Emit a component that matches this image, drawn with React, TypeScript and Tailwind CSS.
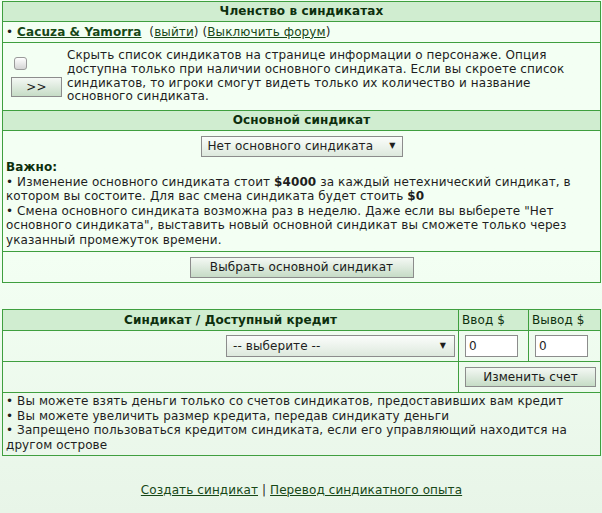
import React from "react";

const btn =
  "border border-[#8c8c8c] bg-gradient-to-b from-[#f4f8f4] to-[#c6dcc6] text-[#1a1a1a] leading-[14px] text-[12px] font-['DejaVu_Sans',Verdana,sans-serif] tracking-[0.1px]";

export default function App() {
  return (
    <div className="min-h-[513px] w-[602px] bg-gradient-to-b from-[#f3fff3] via-[#f3fff3] to-[#e8f5e8] font-['DejaVu_Sans',Verdana,sans-serif] text-[12px] leading-[14.5px] tracking-[0.1px] text-[#1e1e1e]">
      <div className="pt-px pl-[2px] pr-px">
        <table className="w-full border-collapse border border-[#3f9f3f]">
          <tbody>
            <tr>
              <td className="h-[20px] border border-[#3f9f3f] bg-[#d0edd0] text-center font-bold text-[#0d2f0d]">
                Членство в синдикатах
              </td>
            </tr>
            <tr>
              <td className="h-[21px] border border-[#3f9f3f] px-[3px]">
                <span>• </span>
                <a className="font-bold text-[#174717] underline">Cacuza &amp; Yamorra</a>
                <span>&nbsp;&nbsp;(</span>
                <a className="text-[#174717] underline">выйти</a>
                <span>) (</span>
                <a className="text-[#174717] underline">Выключить форум</a>
                <span>)</span>
              </td>
            </tr>
            <tr>
              <td className="h-[68px] border border-[#3f9f3f] px-[3px]">
                <div className="flex items-center">
                  <div className="flex w-[61px] shrink-0 flex-col items-start pl-[5px]">
                    <span className="ml-[3px] mt-[1px] h-[13px] w-[13px] rounded-[3px] border border-[#9a9a9a] bg-gradient-to-b from-[#ffffff] to-[#d4d4d4]" />
                    <button className={`${btn} mt-[7px] h-[20px] w-[51px]`}>&gt;&gt;</button>
                  </div>
                  <div className="leading-[13.7px]">
                    Скрыть список синдикатов на странице информации о персонаже. Опция
                    <br />
                    доступна только при наличии основного синдиката. Если вы скроете список
                    <br />
                    синдикатов, то игроки смогут видеть только их количество и название
                    <br />
                    основного синдиката.
                  </div>
                </div>
              </td>
            </tr>
            <tr>
              <td className="h-[20px] border border-[#3f9f3f] bg-[#d0edd0] text-center font-bold text-[#0d2f0d]">
                Основной синдикат
              </td>
            </tr>
            <tr>
              <td className="border border-[#3f9f3f] px-[3px] pb-[4px] pt-[5px]">
                <div className="flex justify-center">
                  <div className="flex h-[21px] w-[202px] items-center justify-between border border-[#8c8c8c] bg-gradient-to-b from-[#fbfdfb] to-[#dde9dd] pl-[6px] pr-[6px]">
                    <span>Нет основного синдиката</span>
                    <span className="text-[8px]">▼</span>
                  </div>
                </div>
                <div className="mt-[3px] font-bold text-[#0d2f0d]">Важно:</div>
                <div>
                  • Изменение основного синдиката стоит <b>$4000</b> за каждый нетехнический синдикат, в
                  <br />
                  котором вы состоите. Для вас смена синдиката будет стоить <b>$0</b>
                  <br />• Смена основного синдиката возможна раз в неделю. Даже если вы выберете "Нет
                  <br />
                  основного синдиката", выставить новый основной синдикат вы сможете только через
                  <br />
                  указанный промежуток времени.
                </div>
              </td>
            </tr>
            <tr>
              <td className="h-[31px] border border-[#3f9f3f] text-center">
                <button className={`${btn} h-[21px] w-[224px]`}>Выбрать основной синдикат</button>
              </td>
            </tr>
          </tbody>
        </table>

        <table className="mt-[26px] w-full border-collapse border border-[#3f9f3f]">
          <tbody>
            <tr>
              <td className="h-[21px] border border-[#3f9f3f] bg-[#d0edd0] text-center font-bold text-[#0d2f0d]">
                Синдикат / Доступный кредит
              </td>
              <td className="w-[70px] border border-[#3f9f3f] bg-[#d0edd0] px-[3px] text-[#0d2f0d]">Ввод $</td>
              <td className="w-[72px] border border-[#3f9f3f] bg-[#d0edd0] px-[3px] text-[#0d2f0d]">Вывод $</td>
            </tr>
            <tr>
              <td className="h-[31px] border border-[#3f9f3f] pr-[3px]">
                <div className="flex justify-end">
                  <div className="flex h-[22px] w-[229px] items-center justify-between border border-[#8c8c8c] bg-gradient-to-b from-[#fbfdfb] to-[#dde9dd] pl-[6px] pr-[8px]">
                    <span>-- выберите --</span>
                    <span className="text-[8px]">▼</span>
                  </div>
                </div>
              </td>
              <td className="border border-[#3f9f3f] pl-[6px]">
                <div className="flex h-[22px] w-[53px] items-center border border-[#8c8c8c] bg-white px-[3px]">0</div>
              </td>
              <td className="border border-[#3f9f3f] pl-[6px]">
                <div className="flex h-[22px] w-[53px] items-center border border-[#8c8c8c] bg-white px-[3px]">0</div>
              </td>
            </tr>
            <tr>
              <td className="h-[31px] border border-[#3f9f3f]"></td>
              <td colSpan={2} className="border border-[#3f9f3f] pl-[6px]">
                <button className={`${btn} h-[20px] w-[131px]`}>Изменить счет</button>
              </td>
            </tr>
            <tr>
              <td colSpan={3} className="h-[63px] border border-[#3f9f3f] px-[3px] align-top pt-[1px]">
                • Вы можете взять деньги только со счетов синдикатов, предоставивших вам кредит
                <br />• Вы можете увеличить размер кредита, передав синдикату деньги
                <br />• Запрещено пользоваться кредитом синдиката, если его управляющий находится на
                <br />
                другом острове
              </td>
            </tr>
          </tbody>
        </table>

        <div className="mt-[27px] text-center">
          <a className="text-[#174717] underline">Создать синдикат</a>
          <span> | </span>
          <a className="text-[#174717] underline">Перевод синдикатного опыта</a>
        </div>
      </div>
    </div>
  );
}
